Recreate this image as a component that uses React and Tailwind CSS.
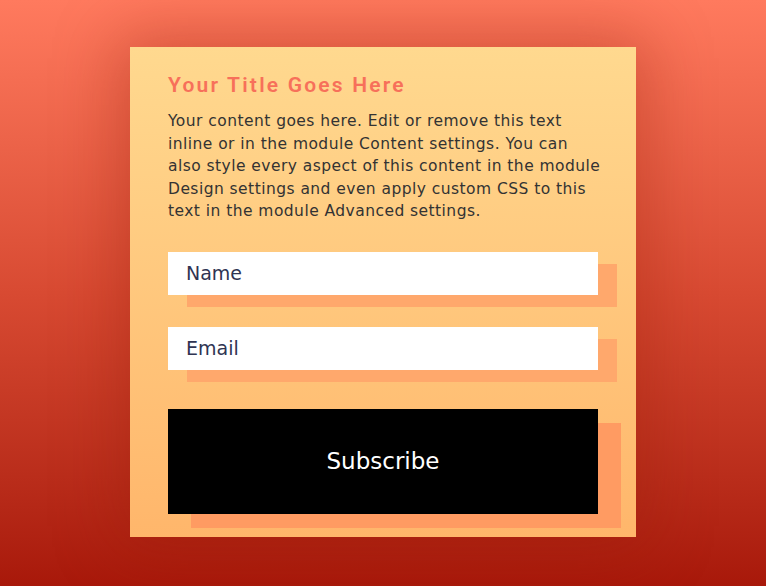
import React from "react";

function Field({ label }) {
  return (
    <input
      type="text"
      placeholder={label}
      className="block w-[430px] h-[43px] bg-white px-[18px] text-[19px] text-[#2f3452] placeholder:text-[#2f3452] outline-none shadow-[19px_12px_0_0_#ffa86c]"
    />
  );
}

export default function App() {
  return (
    <div
      className="w-[766px] h-[586px] bg-gradient-to-b from-[#ff7a5e] via-[#d84a32] to-[#a8180a] flex justify-center pt-[47px]"
      style={{ fontFamily: '"DejaVu Sans", "Open Sans", sans-serif' }}
    >
      <div className="w-[506px] h-[490px] bg-gradient-to-b from-[#ffd98f] to-[#ffb66b] px-[38px] pt-[25px] shadow-[0_0_60px_10px_rgba(150,30,10,0.35)]">
        <h2
          className="text-[21px] font-semibold tracking-[2.2px] text-[#f7705a] leading-[26px]"
          style={{ fontFamily: 'Roboto, "Liberation Sans", sans-serif' }}
        >
          Your Title Goes Here
        </h2>
        <p className="mt-[12px] text-[15.5px] leading-[22.5px] text-[#333333] w-[440px] tracking-[0.45px] whitespace-nowrap">
          Your content goes here. Edit or remove this text
          <br />
          inline or in the module Content settings. You can
          <br />
          also style every aspect of this content in the module
          <br />
          Design settings and even apply custom CSS to this
          <br />
          text in the module Advanced settings.
        </p>
        <div className="mt-[29px] flex flex-col gap-[32px]">
          <Field label="Name" />
          <Field label="Email" />
        </div>
        <button className="mt-[39px] w-[430px] h-[105px] bg-black text-white text-[23px] shadow-[23px_14px_0_0_#ff9b62]">
          Subscribe
        </button>
      </div>
    </div>
  );
}
